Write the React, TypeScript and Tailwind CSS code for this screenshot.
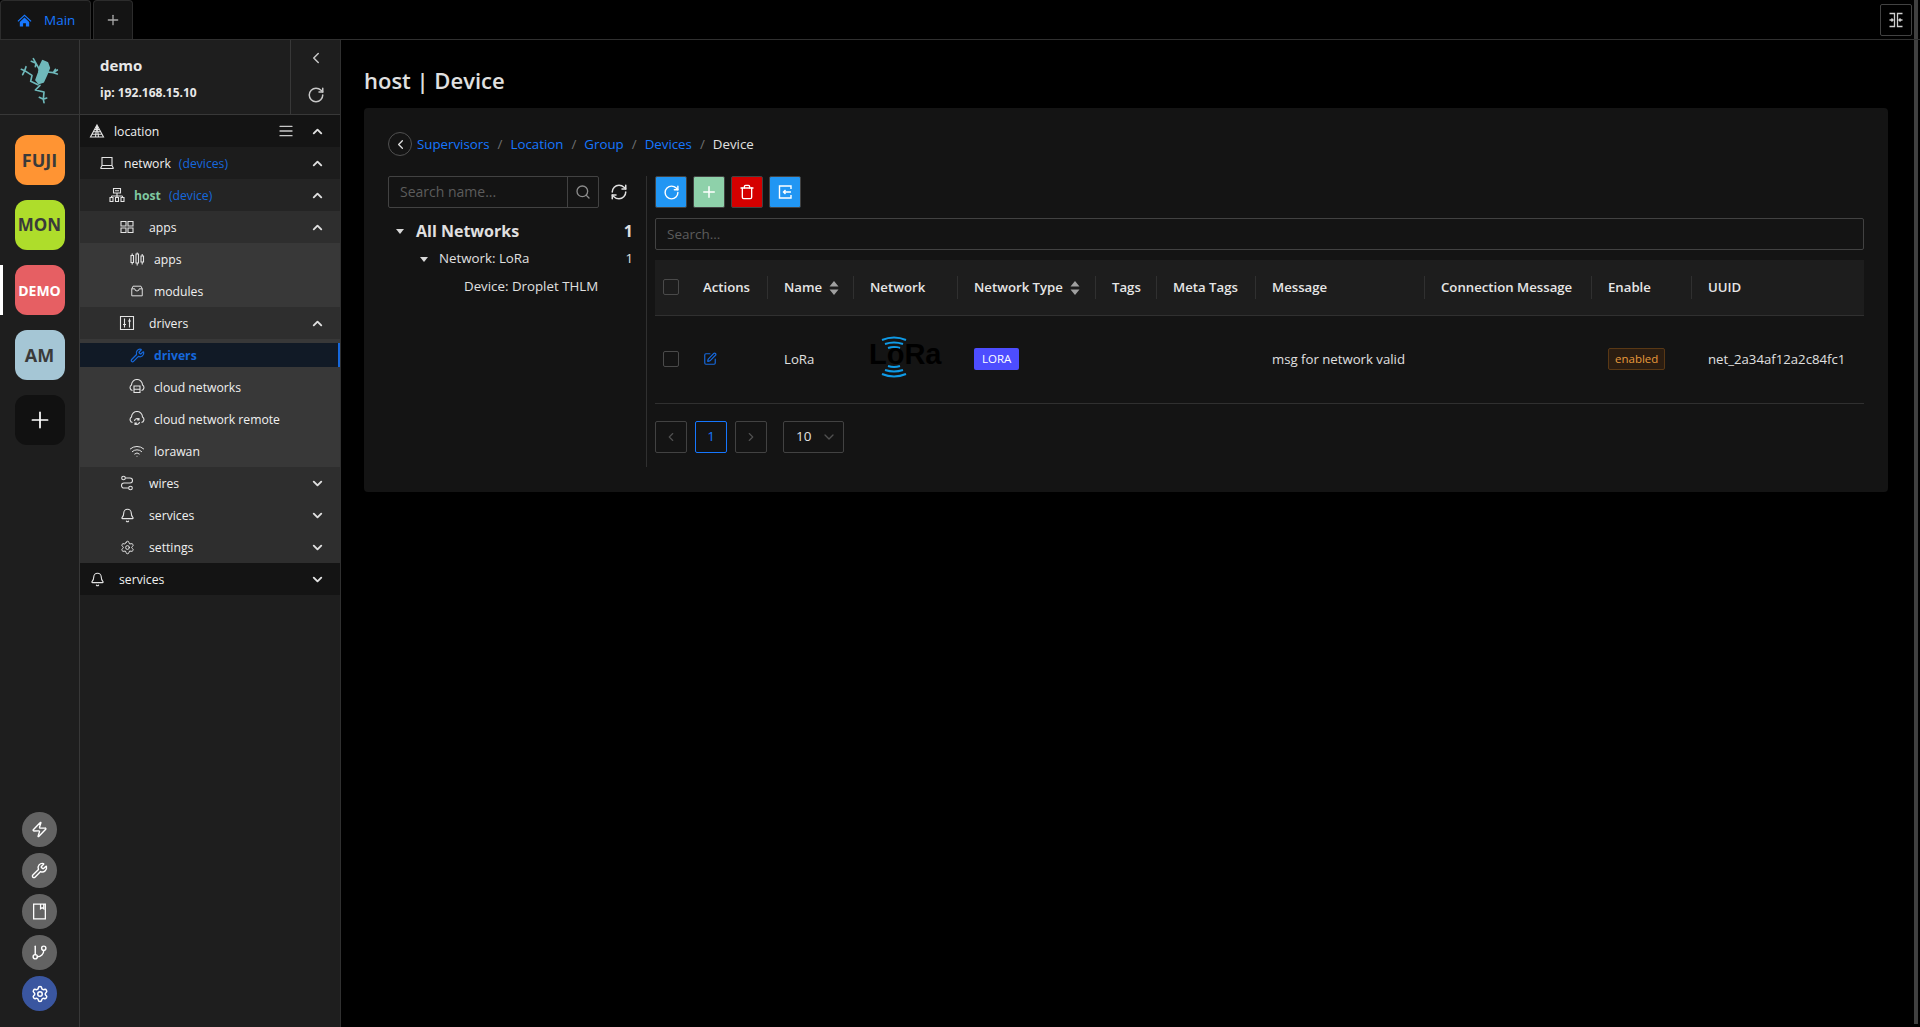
import type { ReactNode } from "react";
import {
  AlignJustify,
  Bell,
  ChevronDown,
  ChevronLeft,
  ChevronRight,
  ChevronUp,
  GitBranch,
  Plus,
  RefreshCw,
  RotateCw,
  Search,
  Settings,
  SquarePen,
  Trash,
  Wifi,
  Wrench,
  Zap,
} from "lucide-react";

const font = "font-['Open_Sans','Noto_Sans',sans-serif]";

function Frog() {
  return (
    <svg viewBox="0 0 180 180" className="w-[60px] h-[60px] mt-[6px]" fill="none" stroke="#6fb9bb" strokeWidth="5" strokeLinejoin="round" strokeLinecap="round">
      <path d="M98 32l14 6 6 16-8 20-10 22-14 4-8-10 8-22 4-20z" fill="#6fb9bb" />
      <path d="M90 62L78 40 64 34M78 40l-8-14M78 40l-2 10" />
      <path d="M112 66l18 2 12-8M130 68l12 4M130 68l6-10" />
      <path d="M84 104L62 94 66 76 44 62 34 58M44 62l-6 12M44 62l4-12" />
      <path d="M90 106l-14 14 26 6-2 22M100 148l-12-6M100 148l10-4M100 148l2 10" />
    </svg>
  );
}

function LoraLogo() {
  return (
    <div className="relative w-[82px] h-[44px] -mt-1 flex items-center pl-[8px]">
      <svg viewBox="0 0 82 44" className="absolute inset-0 w-[82px] h-[44px]" fill="none" stroke="#0f9ae6" strokeWidth="2">
        <path d="M21 5q12-5 24 0M24 9q9-3 18 0M27 13q6-2 12 0" />
        <path d="M21 39q12 5 24 0M24 35q9 3 18 0M27 31q6 2 12 0" />
      </svg>
      <span className="relative -mt-[6px] text-[29px] leading-none font-bold text-black font-['Liberation_Sans',sans-serif]">LoRa</span>
    </div>
  );
}

// small outline icons drawn to match the antd ones in the picture
function Svg({ children, size = 16 }: { children: ReactNode; size?: number }) {
  return (
    <svg viewBox="0 0 16 16" width={size} height={size} fill="none" stroke="currentColor" strokeWidth="1.1">
      {children}
    </svg>
  );
}

const icons = {
  location: (
    <Svg>
      <path d="M8 2l6.5 12h-13zM5.8 6.5h4.4M4.6 8.8h6.8M3.4 11.2h9.2M6.5 14L8 2l1.5 12" />
    </Svg>
  ),
  laptop: (
    <Svg>
      <path d="M3 2.5h10v8H3zM1.5 13.5h13M3 10.5l-1.5 3M13 10.5l1.5 3" />
    </Svg>
  ),
  host: (
    <Svg>
      <path d="M4.5 1.5h7v4.5h-7zM8 6v3M2.5 9h11M2.5 9v1.5M8 9v1.5M13.5 9v1.5M1 10.5h3v4H1zM6.5 10.5h3v4h-3zM12 10.5h3v4h-3zM6 3.7h4" />
    </Svg>
  ),
  grid: (
    <Svg>
      <path d="M2 2.5h5v4.5H2zM9 2.5h5v4.5H9zM2 9h5v4.5H2zM9 9h5v4.5H9z" />
    </Svg>
  ),
  candles: (
    <Svg>
      <path d="M2 4.5h2.5v7H2zM7 3h2.5v9H7zM12 5h2.5v6H12zM3.2 2.5v2M3.2 11.5v2M8.2 1.5V3M8.2 12v2.5M13.2 3v2M13.2 11v2.5" />
    </Svg>
  ),
  inbox: (
    <Svg size={14}>
      <path d="M3.5 2.5h9l1.5 3v8H2v-8zM2 5.5h3.5a2.5 2.5 0 0 0 5 0H14" />
    </Svg>
  ),
  control: (
    <Svg>
      <path d="M1.5 1.5h13v13h-13zM5.500 3.500v9M10.500 3.500v9M4 9.500h3M9 6h3" />
    </Svg>
  ),
  cloudServer: (
    <Svg>
      <path d="M3.5 11.5A3 3 0 0 1 2.5 6a5.5 5.5 0 0 1 11 0 3 3 0 0 1-1 5.5" />
      <path d="M5 7h6v6.5H5zM5 10.2h6M7 8.5h.1M7 12h.1" />
    </Svg>
  ),
  cloudSync: (
    <Svg>
      <path d="M3.5 11.5A3 3 0 0 1 2.5 6a5.5 5.5 0 0 1 11 0 3 3 0 0 1-1 5.5" />
      <path d="M5.5 10a2.5 2.5 0 0 1 4.5-1.3M10.5 11a2.5 2.5 0 0 1-4.5 1.3M10 7v2H8.200M6 14v-2h1.800" />
    </Svg>
  ),
  wires: (
    <Svg>
      <circle cx="4.500" cy="3" r="1.800" />
      <circle cx="11.500" cy="13" r="1.800" />
      <path d="M6.300 3H11a2.500 2.500 0 0 1 0 5H5a2.500 2.500 0 0 0 0 5h4.700" />
    </Svg>
  ),
};

type RowProps = {
  icon: ReactNode;
  label: string;
  note?: string;
  bg: string;
  pad: string;
  gap: string;
  open?: boolean;
  chevron?: boolean;
  labelClass?: string;
  menu?: boolean;
};

function NavRow({ icon, label, note, bg, pad, gap, open, chevron = true, labelClass = "text-[#f0f0f0]", menu }: RowProps) {
  return (
    <div className={`h-8 flex items-center text-[12.2px] ${bg} ${pad}`}>
      <span className="w-4 h-4 flex items-center justify-center text-[#e4e4e4] shrink-0">{icon}</span>
      <span className={`${gap} pt-[3px] ${labelClass}`}>{label}</span>
      {note && <span className="ml-2 pt-[3px] text-[#1668dc]">{note}</span>}
      <span className="ml-auto flex items-center">
        {menu && <AlignJustify size={16} className="mr-[16px] text-[#c8c8c8]" />}
        {chevron &&
          (open ? (
            <ChevronUp size={15} strokeWidth={3} className="mr-[15px] text-[#e0e0e0]" />
          ) : (
            <ChevronDown size={15} strokeWidth={3} className="mr-[15px] text-[#e0e0e0]" />
          ))}
      </span>
    </div>
  );
}

function RailTile({ label, className, size = "text-[18px]" }: { label: string; className: string; size?: string }) {
  return (
    <div className={`w-[50px] h-[50px] rounded-xl flex items-center justify-center font-bold ${size} ${className}`}>
      {label}
    </div>
  );
}

function RoundButton({ children, blue }: { children: ReactNode; blue?: boolean }) {
  return (
    <div className={`w-[35px] h-[35px] rounded-full flex items-center justify-center text-white ${blue ? "bg-[#3a56a0]" : "bg-[#636363]"}`}>
      {children}
    </div>
  );
}

function ToolButton({ children, className }: { children: ReactNode; className: string }) {
  return (
    <div className={`w-8 h-8 rounded-[2px] border border-[#424242] flex items-center justify-center text-white ${className}`}>
      {children}
    </div>
  );
}

function SortArrows() {
  return (
    <svg viewBox="0 0 10 14" className="w-[10px] h-[14px] ml-[7px] inline-block" fill="#a0a0a0">
      <path d="M5 0l4.500 5.500H.5zM5 14L.5 8.500h9z" />
    </svg>
  );
}

function HeadCell({ label, sort, last }: { label: string; sort?: boolean; last?: boolean }) {
  return (
    <th className="p-0 font-semibold text-[13.2px] text-[#e6e6e6] text-left">
      <div className={`h-[23px] pl-4 pt-[2px] flex items-center ${last ? "" : "border-r border-[#303030]"}`}>
        {label}
        {sort && <SortArrows />}
      </div>
    </th>
  );
}

function Checkbox() {
  return <div className="w-4 h-4 rounded-[2px] border border-[#4a4a4a]" />;
}

export default function App() {
  return (
    <div className={`relative h-[1027px] w-[1920px] overflow-hidden flex flex-col bg-black ${font}`}>
      <div className="absolute right-[2px] top-0 bottom-[3px] w-[4px] bg-[#404040]" />

      {/* top tabs */}
      <div className="h-10 shrink-0 flex border-b border-[#303030] relative">
        <div className="w-[91px] h-[39px] rounded-t bg-[#141414] border border-b-0 border-[#2c2c2c] flex items-center pl-4 text-[#1677ff] text-[13.5px]">
          <svg viewBox="0 0 16 16" className="w-[15px] h-[15px] mr-3" fill="#1677ff">
            <path d="M8 1.500L.5 8.500l1 .8L8 3.300l6.500 6 1-.8zM3 9.500V14.500h3.500V11h3v3.500H13V9.500L8 4.800z" />
          </svg>
          <span className="pt-px">Main</span>
        </div>
        <div className="w-[40px] h-[39px] ml-[2px] rounded-t bg-[#141414] border border-b-0 border-[#2c2c2c] flex items-center justify-center text-[#a8a8a8]">
          <Plus size={16} />
        </div>
        <div className="absolute right-2 top-1 w-8 h-8 rounded-[2px] border border-[#424242] flex items-center justify-center text-[#d0d0d0]">
          <svg viewBox="0 0 16 16" className="w-[16px] h-[16px]" fill="none" stroke="currentColor" strokeWidth="1.3">
            <path d="M1.500 1.500h5v13h-5M14.500 1.500h-5v13h5M1.500 8h3.500M14.500 8H11M3.500 6.500L5 8l-1.500 1.500M12.500 6.500L11 8l1.500 1.500" />
          </svg>
        </div>
      </div>

      <div className="flex-1 flex min-h-0">
        {/* sidebar */}
        <div className="w-[341px] shrink-0 flex flex-col bg-[#1e1e1e] border-r border-[#303030]">
          <div className="h-[75px] shrink-0 flex border-b border-[#383838]">
            <div className="w-[80px] shrink-0 flex items-center justify-center border-r border-[#383838]">
              <Frog />
            </div>
            <div className="flex-1 pl-5 pt-[13px] text-[#e8e8e8] font-bold">
              <div className="text-[15px] leading-6">demo</div>
              <div className="text-[12px] leading-5 mt-[6px]">ip: 192.168.15.10</div>
            </div>
            <div className="w-[50px] shrink-0 border-l border-[#383838] flex flex-col items-center pt-[9px] text-[#c8c8c8]">
              <ChevronLeft size={18} />
              <RotateCw size={18} className="mt-[19px]" />
            </div>
          </div>

          <div className="flex-1 flex min-h-0">
            {/* app rail */}
            <div className="w-[80px] shrink-0 border-r border-[#383838] flex flex-col items-center pt-5 pb-4 relative">
              <div className="flex flex-col gap-[15px]">
                <RailTile label="FUJI" className="bg-[#ff9433] text-[#3a3a3a]" />
                <RailTile label="MON" className="bg-[#aedd2b] text-[#3a3a3a]" size="text-[17px]" />
                <RailTile label="DEMO" className="bg-[#e65f63] text-white" size="text-[14px]" />
                <RailTile label="AM" className="bg-[#a5c6d5] text-[#3a3a3a]" />
                <div className="w-[50px] h-[50px] rounded-xl bg-[#111111] flex items-center justify-center text-white">
                  <Plus size={26} strokeWidth={1.6} />
                </div>
              </div>
              <div className="absolute left-0 top-[150px] w-[3px] h-[50px] bg-white" />
              <div className="mt-auto flex flex-col gap-[6px]">
                <RoundButton><Zap size={17} /></RoundButton>
                <RoundButton><Wrench size={17} /></RoundButton>
                <RoundButton>
                  <svg viewBox="0 0 16 16" width={17} height={17} fill="none" stroke="currentColor" strokeWidth="1.200">
                    <path d="M2.500 1h11v14h-11zM9 1v4.500l1.500-1 1.500 1V1" />
                  </svg>
                </RoundButton>
                <RoundButton><GitBranch size={17} /></RoundButton>
                <RoundButton blue><Settings size={18} /></RoundButton>
              </div>
            </div>

            {/* nav tree */}
            <div className="flex-1 min-w-0">
              <NavRow bg="bg-[#141414]" pad="pl-[9px]" gap="ml-[9px]" open menu label="location" icon={icons.location} />
              <NavRow bg="bg-[#1c1c1c]" pad="pl-[19px]" gap="ml-[9px]" open label="network" note="(devices)" icon={icons.laptop} />
              <NavRow bg="bg-[#242424]" pad="pl-[29px]" gap="ml-[9px]" open label="host" note="(device)" labelClass="text-[#7fc8a0] font-bold" icon={icons.host} />
              <NavRow bg="bg-[#2e2e2e]" pad="pl-[39px]" gap="ml-[14px]" open label="apps" icon={icons.grid} />
              <NavRow bg="bg-[#383838]" pad="pl-[49px]" gap="ml-[9px]" chevron={false} label="apps" icon={icons.candles} />
              <NavRow bg="bg-[#383838]" pad="pl-[49px]" gap="ml-[9px]" chevron={false} label="modules" icon={icons.inbox} />
              <NavRow bg="bg-[#2e2e2e]" pad="pl-[39px]" gap="ml-[14px]" open label="drivers" icon={icons.control} />
              <div className="bg-[#383838] py-1">
                <div className="h-6 flex items-center pl-[50px] text-[12.2px] font-bold text-[#1668dc] bg-[#111a26] border-r-2 border-[#1668dc]">
                  <Wrench size={15} />
                  <span className="ml-[9px] pt-[3px]">drivers</span>
                </div>
              </div>
              <NavRow bg="bg-[#383838]" pad="pl-[49px]" gap="ml-[9px]" chevron={false} label="cloud networks" icon={icons.cloudServer} />
              <NavRow bg="bg-[#383838]" pad="pl-[49px]" gap="ml-[9px]" chevron={false} label="cloud network remote" icon={icons.cloudSync} />
              <NavRow bg="bg-[#383838]" pad="pl-[49px]" gap="ml-[9px]" chevron={false} label="lorawan" icon={<Wifi size={16} strokeWidth={1.5} />} />
              <NavRow bg="bg-[#2e2e2e]" pad="pl-[39px]" gap="ml-[14px]" label="wires" icon={icons.wires} />
              <NavRow bg="bg-[#2e2e2e]" pad="pl-[39px]" gap="ml-[14px]" label="services" icon={<Bell size={15} strokeWidth={1.8} />} />
              <NavRow bg="bg-[#2e2e2e]" pad="pl-[39px]" gap="ml-[14px]" label="settings" icon={<Settings size={15} strokeWidth={1.6} />} />
              <NavRow bg="bg-[#141414]" pad="pl-[9px]" gap="ml-[14px]" label="services" icon={<Bell size={15} strokeWidth={1.8} />} />
            </div>
          </div>
        </div>

        {/* main */}
        <div className="flex-1 min-w-0 pl-[23px] pr-8">
          <h1 className="h-[68px] pt-3 flex items-center text-[22px] font-semibold text-[#e0e0e0]">host | Device</h1>
          <div className="h-[384px] bg-[#141414] rounded-sm pl-6 pr-6 pt-6">
            <div className="flex items-center h-6 text-[13.3px] [&>span]:pt-[2px]">
              <div className="w-6 h-6 rounded-full border border-[#505050] flex items-center justify-center text-[#e0e0e0]">
                <ChevronLeft size={15} />
              </div>
              <span className="ml-[5px] text-[#1677ff]">Supervisors</span>
              <span className="mx-2 text-[#707070]">/</span>
              <span className="text-[#1677ff]">Location</span>
              <span className="mx-2 text-[#707070]">/</span>
              <span className="text-[#1677ff]">Group</span>
              <span className="mx-2 text-[#707070]">/</span>
              <span className="text-[#1677ff]">Devices</span>
              <span className="mx-2 text-[#707070]">/</span>
              <span className="text-[#e0e0e0]">Device</span>
            </div>

            <div className="flex mt-5">
              {/* tree */}
              <div className="w-[259px] h-[291px] shrink-0 border-r border-[#303030]">
                <div className="flex items-center">
                  <div className="w-[211px] h-8 flex rounded-[2px] border border-[#424242] text-[14px] text-[#5c5c5c]">
                    <span className="flex-1 pl-[11px] leading-[30px]">Search name...</span>
                    <span className="w-[31px] border-l border-[#424242] flex items-center justify-center text-[#8c8c8c]">
                      <Search size={16} />
                    </span>
                  </div>
                  <RefreshCw size={18} className="ml-[11px] text-[#e0e0e0]" />
                </div>
                <div className="mt-[9px] pr-[13px] text-[#e0e0e0]">
                  <div className="flex items-center h-7 font-bold text-[16px]">
                    <span className="ml-2 w-0 h-0 border-x-[4px] border-x-transparent border-t-[5px] border-t-[#d8d8d8]" />
                    <span className="ml-[12px]">All Networks</span>
                    <span className="ml-auto">1</span>
                  </div>
                  <div className="flex items-center h-7 text-[13.3px]">
                    <span className="ml-[32px] w-0 h-0 border-x-[4px] border-x-transparent border-t-[5px] border-t-[#d8d8d8]" />
                    <span className="ml-[11px]">Network: LoRa</span>
                    <span className="ml-auto">1</span>
                  </div>
                  <div className="flex items-center h-7 text-[13.3px] pl-[76px]">Device: Droplet THLM</div>
                </div>
              </div>

              {/* table side */}
              <div className="flex-1 min-w-0 pl-2">
                <div className="flex gap-[6px]">
                  <ToolButton className="bg-[#2196f3]"><RotateCw size={17} /></ToolButton>
                  <ToolButton className="bg-[#8ed1aa]"><Plus size={18} /></ToolButton>
                  <ToolButton className="bg-[#d50000]"><Trash size={16} /></ToolButton>
                  <ToolButton className="bg-[#2196f3]">
                    <svg viewBox="0 0 16 16" width={16} height={16} fill="none" stroke="currentColor" strokeWidth="1.400">
                      <path d="M14 5V2H2.500v12H14v-3M14 8H6.500M8.500 6L6.500 8l2 2" />
                    </svg>
                  </ToolButton>
                </div>
                <div className="mt-[10px] h-8 rounded-[2px] border border-[#424242] pl-[11px] text-[13.5px] leading-[30px] text-[#5c5c5c]">Search...</div>
                <table className="mt-[10px] w-full table-fixed border-collapse">
                  <colgroup>
                    <col className="w-[32px]" />
                    <col className="w-[81px]" />
                    <col className="w-[86px]" />
                    <col className="w-[104px]" />
                    <col className="w-[138px]" />
                    <col className="w-[61px]" />
                    <col className="w-[99px]" />
                    <col className="w-[169px]" />
                    <col className="w-[167px]" />
                    <col className="w-[100px]" />
                    <col />
                  </colgroup>
                  <thead>
                    <tr className="h-[55px] bg-[#1d1d1d] border-b border-[#303030]">
                      <th className="p-0 pl-2"><Checkbox /></th>
                      <HeadCell label="Actions" />
                      <HeadCell label="Name" sort />
                      <HeadCell label="Network" />
                      <HeadCell label="Network Type" sort />
                      <HeadCell label="Tags" />
                      <HeadCell label="Meta Tags" />
                      <HeadCell label="Message" />
                      <HeadCell label="Connection Message" />
                      <HeadCell label="Enable" />
                      <HeadCell label="UUID" last />
                    </tr>
                  </thead>
                  <tbody>
                    <tr className="h-[88px] border-b border-[#303030] text-[13.2px] text-[#e0e0e0]">
                      <td className="p-0 pl-2"><Checkbox /></td>
                      <td className="p-0 pl-4"><SquarePen size={14} className="text-[#1668dc]" /></td>
                      <td className="p-0 pl-4 pt-[2px]">LoRa</td>
                      <td className="p-0 pl-[7px]"><LoraLogo /></td>
                      <td className="p-0 pl-4">
                        <span className="inline-block h-[22px] px-2 rounded-[2px] bg-[#4d4dff] text-[11.5px] leading-[22px] text-white">LORA</span>
                      </td>
                      <td className="p-0" />
                      <td className="p-0" />
                      <td className="p-0 pl-4 pt-[2px] whitespace-nowrap">msg for network valid</td>
                      <td className="p-0" />
                      <td className="p-0 pl-4">
                        <span className="inline-block h-[22px] px-[6px] rounded-[2px] border border-[#593815] bg-[#2b1d11] text-[11.5px] leading-[20px] text-[#e89a3c]">enabled</span>
                      </td>
                      <td className="p-0 pl-4 pt-[2px] whitespace-nowrap">net_2a34af12a2c84fc1</td>
                    </tr>
                  </tbody>
                </table>
                <div className="mt-[17px] flex items-center">
                  <div className="w-8 h-8 rounded-[2px] border border-[#424242] flex items-center justify-center text-[#505050]"><ChevronLeft size={14} /></div>
                  <div className="w-8 h-8 ml-2 rounded-[2px] border border-[#1677ff] flex items-center justify-center text-[13.5px] text-[#1677ff]">1</div>
                  <div className="w-8 h-8 ml-2 rounded-[2px] border border-[#424242] flex items-center justify-center text-[#505050]"><ChevronRight size={14} /></div>
                  <div className="w-[61px] h-8 ml-4 rounded-[2px] border border-[#424242] flex items-center pl-3 text-[13.5px] text-[#e0e0e0]">
                    10
                    <ChevronDown size={16} className="ml-[10px] text-[#505050]" />
                  </div>
                </div>
              </div>
            </div>
          </div>
        </div>
      </div>
    </div>
  );
}
